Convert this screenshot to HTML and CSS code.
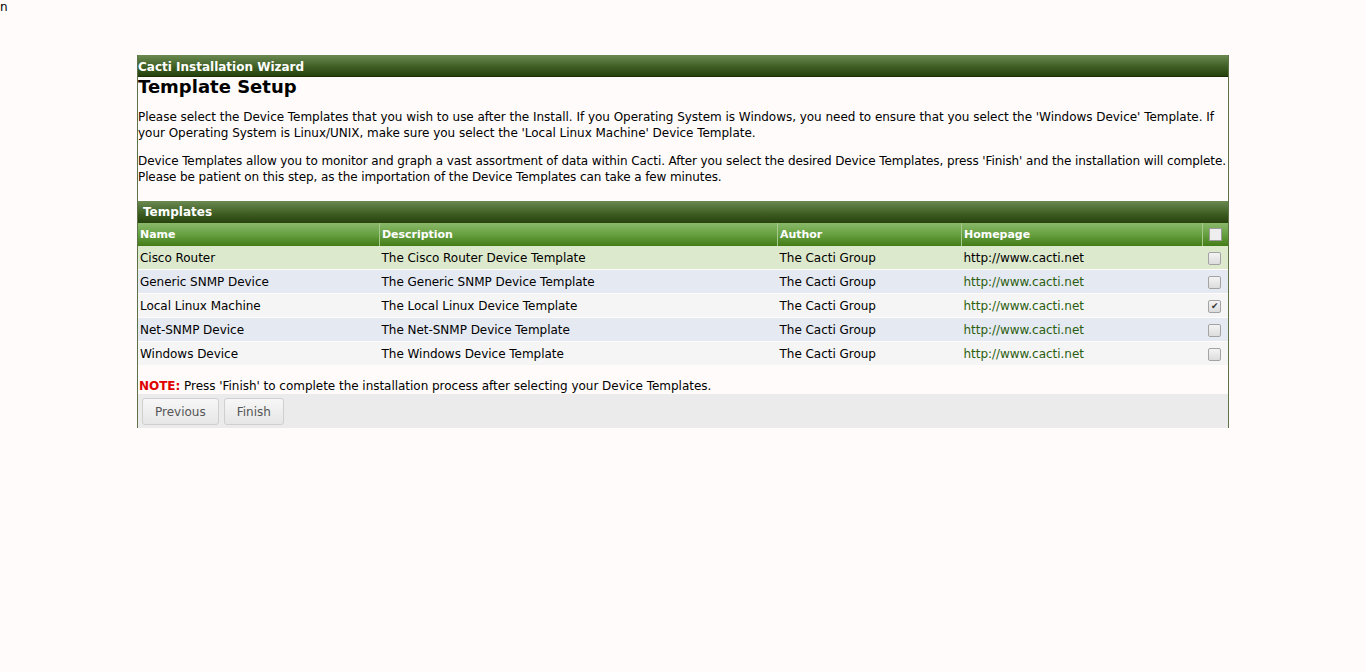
FILE: index.html
```html
<!DOCTYPE html>
<html>
<head>
    <link rel="stylesheet" href="styles.css">
</head>
<body>
    <div class="stray">n</div>
    <div class="wizard">
        <div class="wizard-title">Cacti Installation Wizard</div>
        <div class="wizard-body">
            <h2>Template Setup</h2>
            <p>Please select the Device Templates that you wish to use after the Install. If you Operating System is Windows, you need to ensure that you select the 'Windows Device' Template. If your Operating System is Linux/UNIX, make sure you select the 'Local Linux Machine' Device Template.</p>
            <p class="tight">Device Templates allow you to monitor and graph a vast assortment of data within Cacti. After you select the desired Device Templates, press 'Finish' and the installation will complete. Please be patient on this step, as the importation of the Device Templates can take a few minutes.</p>
        </div>
        <div class="section-title">Templates</div>
        <table class="templates">
            <tr class="head">
                <th class="c-name">Name</th>
                <th class="c-desc">Description</th>
                <th class="c-author">Author</th>
                <th class="c-home">Homepage</th>
                <th class="c-check"><span class="box head-box"></span></th>
            </tr>
            <tr class="row hover">
                <td>Cisco Router</td>
                <td>The Cisco Router Device Template</td>
                <td>The Cacti Group</td>
                <td class="link plain">http://www.cacti.net</td>
                <td class="c-check"><span class="box"></span></td>
            </tr>
            <tr class="row odd">
                <td>Generic SNMP Device</td>
                <td>The Generic SNMP Device Template</td>
                <td>The Cacti Group</td>
                <td class="link">http://www.cacti.net</td>
                <td class="c-check"><span class="box"></span></td>
            </tr>
            <tr class="row even">
                <td>Local Linux Machine</td>
                <td>The Local Linux Device Template</td>
                <td>The Cacti Group</td>
                <td class="link">http://www.cacti.net</td>
                <td class="c-check"><span class="box checked">&#10004;</span></td>
            </tr>
            <tr class="row odd">
                <td>Net-SNMP Device</td>
                <td>The Net-SNMP Device Template</td>
                <td>The Cacti Group</td>
                <td class="link">http://www.cacti.net</td>
                <td class="c-check"><span class="box"></span></td>
            </tr>
            <tr class="row even">
                <td>Windows Device</td>
                <td>The Windows Device Template</td>
                <td>The Cacti Group</td>
                <td class="link">http://www.cacti.net</td>
                <td class="c-check"><span class="box"></span></td>
            </tr>
        </table>
        <div class="note"><span class="note-label">NOTE:</span> Press 'Finish' to complete the installation process after selecting your Device Templates.</div>
        <div class="buttons">
            <button>Previous</button>
            <button>Finish</button>
        </div>
    </div>
</body>
</html>
```

FILE: styles.css
```css
body {
    margin: 0;
    padding: 0;
    background-color: #fffbfa;
    font-family: "DejaVu Sans", Verdana, sans-serif;
    font-size: 12px;
    letter-spacing: -0.03px;
    color: #000;
}

.stray {
    height: 15px;
    line-height: 15px;
}

.wizard {
    width: 1090px;
    margin: 40px 0 0 137px;
    border-left: 1px solid #5d7048;
    border-right: 1px solid #5d7048;
    background-color: #fffbfa;
}

.wizard-title {
    height: 22px;
    line-height: 24px;
    color: #fff;
    font-weight: bold;
    font-size: 12px;
    letter-spacing: 0;
    background: linear-gradient(to bottom, #6b8a52 0%, #3f5f25 55%, #27420d 100%);
    border-bottom: 1px solid #1b2e08;
    box-sizing: border-box;
}

.wizard-body {
    padding: 0 0 16px 0;
}

.wizard-body h2 {
    margin: 0;
    font-size: 18px;
    line-height: 20px;
    letter-spacing: 0;
}

.wizard-body p {
    margin: 12px -14px 0 0;
    line-height: 16px;
}

.wizard-body p.tight {
    letter-spacing: -0.1px;
}

.section-title {
    height: 22px;
    line-height: 22px;
    padding-left: 5px;
    color: #fff;
    font-weight: bold;
    font-size: 12px;
    letter-spacing: 0;
    background: linear-gradient(to bottom, #6b8a52 0%, #3f5f25 55%, #27420d 100%);
}

.templates {
    width: 100%;
    border-collapse: collapse;
    table-layout: fixed;
}

.templates th {
    height: 23px;
    text-align: left;
    color: #fff;
    font-weight: bold;
    font-size: 11px;
    padding: 0 2px;
    background: linear-gradient(to bottom, #8ab86b 0%, #66a040 50%, #437c17 100%);
    border-left: 1px solid #a6c98e;
}

.templates th:first-child {
    border-left: none;
}

.c-name { width: 237px; }
.c-desc { width: 393px; }
.c-author { width: 179px; }
.c-home { width: 236px; }
.templates .c-check { text-align: center; padding: 0 1px 0 0; }

.templates td {
    height: 23px;
    padding: 0 2px;
    border-bottom: 1px solid #fffbfa;
    white-space: nowrap;
}

.templates tr.hover td { background-color: #dde9cc; }
.templates tr.odd td { background-color: #e5e9f2; }
.templates tr.even td { background-color: #f5f5f5; }

.templates td.link { color: #2c5e0f; }
.templates td.plain { color: #000; }

.box {
    display: inline-block;
    width: 11px;
    height: 11px;
    border: 1px solid #a3a3a3;
    border-radius: 2px;
    background: linear-gradient(to bottom, #f4f4f4, #dcdcdc);
    vertical-align: middle;
    font-size: 9px;
    line-height: 11px;
    color: #333;
    text-align: center;
}

.head-box {
    background: #eee;
    border-color: #9a9a9a;
    border-radius: 0;
}

.note {
    padding: 12px 0 0 1px;
    line-height: 16px;
}

.note-label {
    color: #e00000;
    font-weight: bold;
}

.buttons {
    background-color: #ebebeb;
    padding: 4px 4px 3px;
    display: flex;
    gap: 5px;
}

.buttons button {
    font-family: "DejaVu Sans", Verdana, sans-serif;
    font-size: 12px;
    color: #555;
    height: 27px;
    padding: 0 12px;
    border: 1px solid #cfcfcf;
    border-radius: 3px;
    background: linear-gradient(to bottom, #f7f7f7, #e6e6e6);
}
```
